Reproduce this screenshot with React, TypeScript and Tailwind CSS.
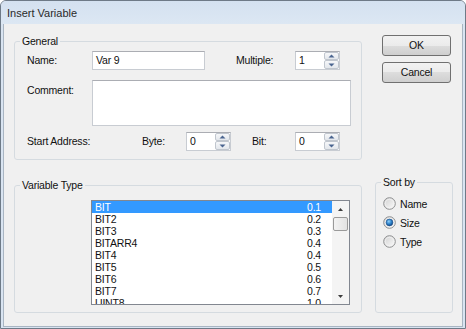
import React from "react";

function SpinArrow({ up }: { up: boolean }) {
  return (
    <svg width="7" height="4" viewBox="0 0 7 4">
      <polygon points={up ? "0.5,3.5 3.5,0.5 6.5,3.5" : "0.5,0.5 6.5,0.5 3.5,3.5"} fill="#4a6590" />
    </svg>
  );
}

function Spin({ value }: { value: string }) {
  return (
    <div className="flex h-[19px] w-[45px] shrink-0 border border-[#c8ccd2] border-t-[#abadb3] bg-white">
      <div className="flex-1 pl-[3px] leading-[17px]">{value}</div>
      <div className="flex w-[15px] flex-col">
        <div className="flex h-[8px] items-center justify-center rounded-[2px] border border-[#c0c6ce] bg-[linear-gradient(#f6f7f9,#e3e7ec)]">
          <SpinArrow up />
        </div>
        <div className="flex h-[9px] items-center justify-center rounded-[2px] border border-[#c0c6ce] bg-[linear-gradient(#f6f7f9,#e3e7ec)]">
          <SpinArrow up={false} />
        </div>
      </div>
    </div>
  );
}

function Radio({ checked, label }: { checked: boolean; label: string }) {
  return (
    <div className="flex h-[19px] items-center gap-[4px]">
      <svg width="13" height="13" viewBox="0 0 13 13">
        <defs>
          <linearGradient id="rbg" x1="0" y1="0" x2="1" y2="1">
            <stop offset="0" stopColor="#cfcfcf" />
            <stop offset="1" stopColor="#fdfdfd" />
          </linearGradient>
          <radialGradient id="rdot" cx="0.4" cy="0.35" r="0.7">
            <stop offset="0" stopColor="#8fd0fb" />
            <stop offset="0.55" stopColor="#2b80c8" />
            <stop offset="1" stopColor="#0f3f7a" />
          </radialGradient>
        </defs>
        <circle cx="6.5" cy="6.5" r="5.8" fill="url(#rbg)" stroke="#8e8f90" strokeWidth="1" />
        <circle cx="6.5" cy="6.5" r="4.3" fill="none" stroke="#f4f4f4" strokeWidth="0.8" />
        {checked && <circle cx="6.5" cy="6.5" r="3.4" fill="url(#rdot)" stroke="#1d4f8a" strokeWidth="0.6" />}
      </svg>
      <span className="leading-[12px]">{label}</span>
    </div>
  );
}

const items: [string, string][] = [
  ["BIT", "0.1"],
  ["BIT2", "0.2"],
  ["BIT3", "0.3"],
  ["BITARR4", "0.4"],
  ["BIT4", "0.4"],
  ["BIT5", "0.5"],
  ["BIT6", "0.6"],
  ["BIT7", "0.7"],
  ["UINT8", "1.0"],
];

export default function App() {
  return (
    <div className="flex h-[329px] w-[466px] flex-col overflow-hidden rounded-t-[6px] border border-[#6e7a87] bg-[#d9e4f1] font-['Liberation_Sans',Arial,sans-serif] text-[10.5px] tracking-[-0.2px] text-[#111]">
      <div className="flex h-[23px] shrink-0 items-center bg-[linear-gradient(#d4e1f0,#dce7f3)] pl-[6px] pt-[2px] text-[11px] tracking-normal text-[#2a2a2a]">
        Insert Variable
      </div>
      <div className="mx-[2px] mb-[1px] flex flex-1 border-x border-b border-[#a9b5c2] bg-[#f0f0f0] pl-[10px]">
        {/* left column */}
        <div className="flex w-[348px] flex-col pt-[11px]">
          <fieldset className="rounded-[3px] border border-[#d5dbe0]">
            <legend className="ml-[5px] px-[2px] leading-[12px]">General</legend>
            <div className="flex flex-col pl-[12px] pt-[4px] pb-[8px]">
              <div className="flex h-[19px] items-center">
                <div className="w-[65px]">Name:</div>
                <div className="h-[19px] w-[113px] border border-[#c8ccd2] border-t-[#abadb3] bg-white pl-[3px] leading-[17px]">
                  Var 9
                </div>
                <div className="ml-[31px] w-[59px]">Multiple:</div>
                <Spin value="1" />
              </div>
              <div className="mt-[10px] flex items-start">
                <div className="w-[65px] pt-[4px] leading-[12px]">Comment:</div>
                <div className="h-[46px] w-[259px] border border-[#c8ccd2] border-t-[#abadb3] bg-white" />
              </div>
              <div className="mt-[6px] flex h-[19px] items-center">
                <div className="w-[115px]">Start Address:</div>
                <div className="w-[44px]">Byte:</div>
                <Spin value="0" />
                <div className="ml-[21px] w-[43px]">Bit:</div>
                <Spin value="0" />
              </div>
            </div>
          </fieldset>
          <fieldset className="mt-[19px] rounded-[3px] border border-[#d5dbe0]">
            <legend className="ml-[5px] px-[2px] leading-[12px]">Variable Type</legend>
            <div className="pl-[76px] pt-[9px] pb-[7px]">
              <div className="flex h-[105px] w-[259px] overflow-hidden border border-[#828790] bg-white">
                <div className="flex w-[240px] flex-col">
                  {items.map(([n, s], i) => (
                    <div
                      key={n}
                      className={
                        i === 0
                          ? "flex h-[12px] shrink-0 justify-between bg-[#3399ff] pl-[3px] pr-[11px] leading-[12px] text-white"
                          : "flex h-[12px] shrink-0 justify-between pl-[3px] pr-[11px] leading-[12px]"
                      }
                    >
                      <span>{n}</span>
                      <span>{s}</span>
                    </div>
                  ))}
                </div>
                <div className="flex w-[17px] flex-col bg-[#f4f4f4]">
                  <div className="flex h-[16px] shrink-0 items-center justify-center">
                    <svg width="5" height="3" viewBox="0 0 5 3">
                      <polygon points="0,3 2.5,0 5,3" fill="#3c3c3c" />
                    </svg>
                  </div>
                  <div className="mx-[1px] h-[14px] shrink-0 rounded-[2px] border border-[#9a9a9a] bg-[linear-gradient(90deg,#f3f3f3,#e2e2e2)]" />
                  <div className="flex-1" />
                  <div className="flex h-[16px] shrink-0 items-center justify-center">
                    <svg width="5" height="3" viewBox="0 0 5 3">
                      <polygon points="0,0 5,0 2.5,3" fill="#3c3c3c" />
                    </svg>
                  </div>
                </div>
              </div>
            </div>
          </fieldset>
        </div>
        {/* right column */}
        <div className="ml-[13px] flex w-[78px] flex-col pt-[11px]">
          <div className="ml-[7px] flex h-[21px] w-[69px] items-center justify-center rounded-[3px] border border-[#707070] bg-[linear-gradient(#f2f2f2_0%,#ebebeb_50%,#dddddd_50%,#cfcfcf_100%)]">
            OK
          </div>
          <div className="mt-[6px] ml-[7px] flex h-[21px] w-[69px] items-center justify-center rounded-[3px] border border-[#707070] bg-[linear-gradient(#f2f2f2_0%,#ebebeb_50%,#dddddd_50%,#cfcfcf_100%)]">
            Cancel
          </div>
          <fieldset className="mt-[93px] h-[137px] rounded-[3px] border border-[#d5dbe0]">
            <legend className="ml-[5px] px-[2px] leading-[12px]">Sort by</legend>
            <div className="flex flex-col pl-[7px] pt-[6px]">
              <Radio checked={false} label="Name" />
              <Radio checked label="Size" />
              <Radio checked={false} label="Type" />
            </div>
          </fieldset>
        </div>
      </div>
    </div>
  );
}
